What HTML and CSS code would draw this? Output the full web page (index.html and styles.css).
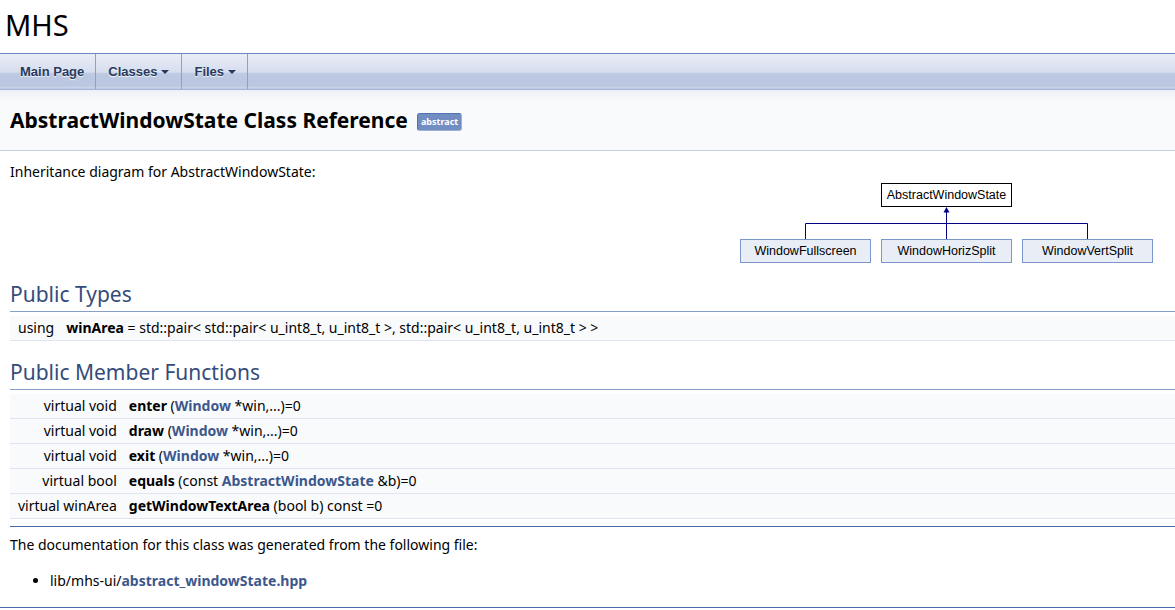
FILE: index.html
```html
<!DOCTYPE html>
<html lang="en">
<head>
<meta charset="utf-8">
<title>MHS: AbstractWindowState Class Reference</title>
<link rel="stylesheet" href="styles.css">
</head>
<body>
<div class="titlearea"><div class="projectname">MHS</div></div>
<nav class="navbar">
  <a class="navitem">Main Page</a>
  <a class="navitem">Classes<span class="caret"></span></a>
  <a class="navitem">Files<span class="caret"></span></a>
</nav>
<div class="header">
  <div class="title">AbstractWindowState Class Reference<span class="mlabel">abstract</span></div>
</div>
<div class="contents">
  <p class="intro">Inheritance diagram for AbstractWindowState:</p>
  <div class="diagram">
    <svg class="diagram-svg" width="420" height="82" viewBox="0 0 420 82">
      <rect x="145.5" y="2.5" width="130" height="23" fill="#ffffff" stroke="#000000"/>
      <text x="210.5" y="18" class="dtext">AbstractWindowState</text>
      <line x1="210.5" y1="30" x2="210.5" y2="58" stroke="#000080"/>
      <polygon points="210.5,26 207.5,31.5 213.5,31.5" fill="#000080"/>
      <line x1="69.5" y1="42.5" x2="351.5" y2="42.5" stroke="#000080"/>
      <line x1="69.5" y1="42.5" x2="69.5" y2="58" stroke="#000080"/>
      <line x1="351.5" y1="42.5" x2="351.5" y2="58" stroke="#000080"/>
      <rect x="4.5" y="58.5" width="130" height="23" fill="#E8EDF6" stroke="#7A96CB"/>
      <text x="69.5" y="74" class="dtext">WindowFullscreen</text>
      <rect x="145.5" y="58.5" width="130" height="23" fill="#E8EDF6" stroke="#7A96CB"/>
      <text x="210.5" y="74" class="dtext">WindowHorizSplit</text>
      <rect x="286.5" y="58.5" width="130" height="23" fill="#E8EDF6" stroke="#7A96CB"/>
      <text x="351.5" y="74" class="dtext">WindowVertSplit</text>
    </svg>
  </div>

  <h2 class="groupheader">Public Types</h2>
  <table class="memberdecls">
    <tr><td class="memItemLeft">using</td><td class="memItemRight"><b>winArea</b> = std::pair&lt; std::pair&lt; u_int8_t, u_int8_t &gt;, std::pair&lt; u_int8_t, u_int8_t &gt; &gt;</td></tr>
  </table>

  <h2 class="groupheader">Public Member Functions</h2>
  <table class="memberdecls">
    <tr><td class="memItemLeft">virtual void</td><td class="memItemRight"><b>enter</b> (<a class="el">Window</a> *win,...)=0</td></tr>
    <tr><td class="memItemLeft">virtual void</td><td class="memItemRight"><b>draw</b> (<a class="el">Window</a> *win,...)=0</td></tr>
    <tr><td class="memItemLeft">virtual void</td><td class="memItemRight"><b>exit</b> (<a class="el">Window</a> *win,...)=0</td></tr>
    <tr><td class="memItemLeft">virtual bool</td><td class="memItemRight"><b>equals</b> (const <a class="el">AbstractWindowState</a> &amp;b)=0</td></tr>
    <tr><td class="memItemLeft">virtual winArea</td><td class="memItemRight"><b>getWindowTextArea</b> (bool b) const =0</td></tr>
  </table>

  <hr class="sep">
  <p class="docfrom">The documentation for this class was generated from the following file:</p>
  <ul class="files">
    <li>lib/mhs-ui/<a class="el">abstract_windowState.hpp</a></li>
  </ul>
</div>
<hr class="footer">
</body>
</html>
```

FILE: styles.css
```css
html, body {
  margin: 0;
  padding: 0;
  background: #ffffff;
}

body {
  font-family: "Noto Sans", "DejaVu Sans", sans-serif;
  font-size: 14px;
  line-height: 19px;
  color: #000000;
}

.titlearea {
  box-sizing: border-box;
  height: 53px;
  padding: 5px 0 0 5px;
}

.projectname {
  font-size: 29px;
  line-height: 40px;
}

.navbar {
  display: flex;
  height: 35px;
  padding-left: 8px;
  border-top: 1px solid #6B87C1;
  border-bottom: 1px solid #A3B4D7;
  background: linear-gradient(to bottom,
    #E9EDF6 0%,
    #D6DDEE 52%,
    #BDC9E2 56%,
    #BAC7E0 90%,
    #CCD5EA 97%,
    #B4C2DF 100%);
}

.navitem {
  display: flex;
  align-items: center;
  padding: 0 12px;
  border-right: 1px solid #8DA0CB;
  font-family: "Liberation Sans", Arial, sans-serif;
  font-weight: bold;
  font-size: 13px;
  line-height: 35px;
  color: #283A5D;
  text-shadow: 0 1px 1px rgba(255, 255, 255, 0.9);
}

.navitem:first-child {
  padding-right: 11px;
}

.navitem:last-child {
  padding-right: 11px;
}

.caret {
  display: inline-block;
  width: 0;
  height: 0;
  margin-left: 4px;
  margin-top: 1px;
  border-top: 4px solid #283A5D;
  border-left: 4px solid transparent;
  border-right: 4px solid transparent;
}

.header {
  padding: 5px 5px 5px 10px;
  background: linear-gradient(to bottom, #EDF0F7 0px, #F9FAFC 12px);
  border-bottom: 1px solid #C4CFE5;
}

.title {
  margin: 10px 0;
  font-size: 21px;
  font-weight: bold;
  line-height: 30px;
}

.mlabel {
  display: inline-block;
  vertical-align: 3px;
  margin-left: 9px;
  padding: 2px 3px;
  border-radius: 3px;
  border-top: 1px solid #5373B4;
  border-left: 1px solid #5373B4;
  border-right: 1px solid #9CAFD4;
  border-bottom: 1px solid #9CAFD4;
  background: #728DC1;
  color: #ffffff;
  font-size: 9px;
  line-height: 12px;
  font-weight: bold;
}

.contents {
  margin-left: 10px;
}

.intro {
  margin: 11px 0 0 0;
}

.diagram {
  display: flex;
  justify-content: flex-end;
  height: 82px;
}

.diagram-svg {
  display: block;
  margin-right: 19px;
}

.dtext {
  font-family: "Liberation Sans", Arial, sans-serif;
  font-size: 12.5px;
  text-anchor: middle;
  fill: #000000;
}

.groupheader {
  margin: 17px 0 4px 0;
  padding: 0 0 3px 0;
  font-size: 21px;
  font-weight: normal;
  line-height: 28px;
  color: #354C7B;
  border-bottom: 1px solid #879ECB;
}

.memberdecls {
  width: 100%;
  border-spacing: 0;
  border-collapse: separate;
}

.memberdecls td {
  padding: 0;
  line-height: 24px;
  background: #F9FAFC;
  border-bottom: 1px solid #DEE4F0;
  white-space: nowrap;
  vertical-align: middle;
}

.memItemLeft {
  width: 1%;
  text-align: right;
  padding: 0 4px 0 8px !important;
}

.memItemRight {
  padding: 0 8px !important;
}

.el {
  color: #3D578C;
  font-weight: bold;
  text-decoration: none;
}

.sep {
  height: 0;
  margin: 7px 0 0 0;
  border: none;
  border-top: 1px solid #4A6AAA;
}

.docfrom {
  margin: 8px 0 0 0;
}

.files {
  margin: 17px 0;
  padding-left: 40px;
}

.footer {
  height: 0;
  margin: 0;
  border: none;
  border-top: 1px solid #4A6AAA;
}
```
